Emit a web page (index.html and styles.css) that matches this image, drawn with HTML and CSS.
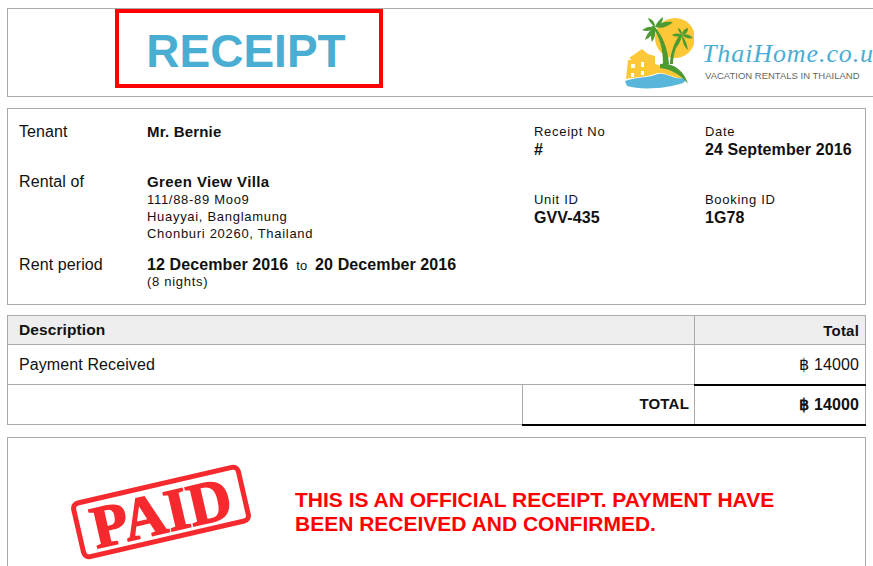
FILE: index.html
```html
<!DOCTYPE html>
<html lang="en">
  <head>
    <meta charset="utf-8" />
    <title>Receipt</title>
    <link rel="stylesheet" href="styles.css">
  </head>
  <body>
    <header class="top-box">
      <h1 class="receipt-title">RECEIPT</h1>
      <div class="logo">
        <svg class="logo-mark" width="70" height="76" viewBox="0 0 70 76">
          <circle cx="51" cy="24" r="20" fill="#fcc838" />
          <path d="M1 67 C12 63 24 64 34 60 C42 58 50 66 60 64 C62 66 61 68 59 69 C42 75 16 76 3 72 Z" fill="#58b6da" />
          <path d="M2 65 L4 46 L8 46 L5 44 L18 35 L24 40 L31 42 L31 50 C40 52 52 58 60 64 C50 65 42 58 34 59 C24 63 12 63 2 65 Z" fill="#fcc838" />
          <path d="M7 50 h4 v4 h-4 Z M7 59 h3 v4 h-3 Z M17 48 h3 v5 h-3 Z M17 57 h3 v4 h-3 Z" fill="#fff" />
          <path d="M36 50 C48 48 60 56 64 70 C58 62 48 55 36 54 Z" fill="#4c9a30" />
          <path d="M29 11 C38 20 44 34 45 50 L39 50 C39 36 36 22 28 13 Z" fill="#4c9a30" />
          <path d="M58 21 C53 30 49 40 49 50 L46 50 C46 40 50 29 56 20 Z" fill="#4c9a30" />
          <path d="M31 13 C33 8 36 5 39 3 C39 8 36 12 31 13 Z" fill="#4c9a30" />
          <path d="M31 13 C36 8 43 7 49 8 C44 13 37 15 31 13 Z" fill="#4c9a30" />
          <path d="M31 13 C27 10 25 7 24 4 C28 5 31 8 31 13 Z" fill="#4c9a30" />
          <path d="M31 13 C26 12 22 13 18 16 C23 18 28 17 31 13 Z" fill="#4c9a30" />
          <path d="M31 13 C26 16 22 21 21 26 C26 24 30 19 31 13 Z" fill="#4c9a30" />
          <path d="M31 13 C32 19 31 24 28 28 C26 23 27 17 31 13 Z" fill="#4c9a30" />
          <path d="M58 21 C58 18 60 15 64 14 C64 18 62 20 58 21 Z" fill="#4c9a30" />
          <path d="M58 21 C62 19 66 21 69 24 C65 25 61 24 58 21 Z" fill="#4c9a30" />
          <path d="M58 21 C56 19 54 17 54 14 C57 15 58 18 58 21 Z" fill="#4c9a30" />
          <path d="M58 21 C55 19 51 19 48 21 C51 23 55 23 58 21 Z" fill="#4c9a30" />
          <path d="M58 21 C54 25 51 30 49 36 C54 33 57 27 58 21 Z" fill="#4c9a30" />
          <path d="M58 21 C61 25 63 30 64 36 C60 33 58 27 58 21 Z" fill="#4c9a30" />
        </svg>
        <div class="logo-text">
          <div class="logo-name">ThaiHome.co.uk</div>
          <div class="logo-tag">VACATION RENTALS IN THAILAND</div>
        </div>
      </div>
    </header>

    <section class="details">
      <div class="party">
        <div class="party-row row-tenant">
          <div class="party-label">Tenant</div>
          <div><b>Mr. Bernie</b></div>
        </div>
        <div class="party-row row-rental">
          <div class="party-label">Rental of</div>
          <div>
            <b class="wide">Green View Villa</b>
            <div class="small">111/88-89 Moo9<br />Huayyai, Banglamung<br />Chonburi 20260, Thailand</div>
          </div>
        </div>
        <div class="party-row">
          <div class="party-label">Rent period</div>
          <div>
            <b class="large">12 December 2016</b><span class="small to">to</span><b class="large">20 December 2016</b>
            <div class="small nights">(8 nights)</div>
          </div>
        </div>
      </div>
      <div class="meta">
        <div class="meta-item">
          <div class="small">Receipt No</div>
          <b class="large">#</b>
        </div>
        <div class="meta-item">
          <div class="small">Date</div>
          <b class="large">24 September 2016</b>
        </div>
        <div class="meta-item">
          <div class="small">Unit ID</div>
          <b class="large">GVV-435</b>
        </div>
        <div class="meta-item">
          <div class="small">Booking ID</div>
          <b class="large">1G78</b>
        </div>
      </div>
    </section>

    <table class="items">
      <colgroup>
        <col class="col-a" />
        <col class="col-b" />
        <col class="col-c" />
      </colgroup>
      <tr class="head-row">
        <th colspan="2" class="left">Description</th>
        <th class="right">Total</th>
      </tr>
      <tr class="item-row">
        <td colspan="2">Payment Received</td>
        <td class="right">฿ 14000</td>
      </tr>
      <tr class="sum-row">
        <td></td>
        <td class="right sum"><b>TOTAL</b></td>
        <td class="right sum grand"><b>฿ 14000</b></td>
      </tr>
    </table>

    <section class="paid-box">
      <div class="stamp-wrap">
        <div class="stamp">PAID</div>
      </div>
      <p class="paid-note">THIS IS AN OFFICIAL RECEIPT. PAYMENT HAVE BEEN RECEIVED AND CONFIRMED.</p>
    </section>
  </body>
</html>
```

FILE: styles.css
```css
html {
  overflow: hidden;
}

body {
  margin: 8px 0 0 7px;
  background-color: #ffffff;
  color: #111111;
  font-family: "Liberation Sans", Arial, sans-serif;
  font-size: 16px;
  letter-spacing: 0.1px;
}

b {
  font-size: 15px;
  font-weight: 700;
  letter-spacing: 0.2px;
}

b.large {
  font-size: 16px;
  letter-spacing: 0.1px;
}

b.wide {
  letter-spacing: 0.4px;
}

.small {
  font-size: 13px;
  line-height: 17px;
  letter-spacing: 0.7px;
  font-weight: 400;
}

.top-box {
  display: flex;
  justify-content: space-between;
  height: 87px;
  border: 1px solid #aaaaaa;
  border-right: none;
}

.receipt-title {
  box-sizing: border-box;
  width: 268px;
  height: 79px;
  margin: 0 0 0 107px;
  padding-right: 6px;
  border: 4px solid #ff0000;
  color: #4aaed2;
  font-size: 46px;
  line-height: 77px;
  letter-spacing: 0;
  text-align: center;
}

.logo {
  display: flex;
  align-items: flex-start;
  margin-right: 13px;
  padding-top: 5px;
}

.logo-mark {
  margin-right: 8px;
}

.logo-text {
  width: 158px;
  padding-top: 26px;
}

.logo-name {
  color: #4aaed2;
  font-family: "Liberation Serif", serif;
  font-size: 26px;
  font-style: italic;
  line-height: 28px;
  letter-spacing: 0.9px;
  white-space: nowrap;
}

.logo-tag {
  margin-top: 2px;
  margin-left: 3px;
  color: #666666;
  font-size: 9.5px;
  line-height: 12px;
  letter-spacing: 0;
  white-space: nowrap;
}

.details {
  display: flex;
  box-sizing: border-box;
  width: 859px;
  height: 197px;
  margin-top: 11px;
  padding: 14px 11px 0;
  border: 1px solid #aaaaaa;
}

.party {
  width: 515px;
}

.party-row {
  display: flex;
  line-height: 18px;
}

.party-label {
  width: 128px;
  flex-shrink: 0;
}

.row-tenant {
  height: 50px;
}

.row-rental {
  height: 83px;
}

.to {
  margin: 0 8px;
  letter-spacing: 0;
}

.nights {
  margin-top: -1px;
}

.meta {
  display: grid;
  grid-template-columns: 171px 1fr;
  grid-auto-rows: 68px;
  line-height: 19px;
}

.items {
  box-sizing: border-box;
  width: 859px;
  margin-top: 10px;
  border-collapse: collapse;
  table-layout: fixed;
}

.col-a {
  width: 515px;
}

.col-b {
  width: 172px;
}

.items th,
.items td {
  padding: 0 6px 0 11px;
  border: 1px solid #aaaaaa;
}

.items th {
  background-color: #eeeeee;
  font-size: 15.5px;
  font-weight: 700;
}

.items th.right {
  font-size: 15px;
  letter-spacing: 0.2px;
}

.items .grand b {
  font-size: 16px;
  letter-spacing: 0.1px;
}

.head-row {
  height: 29px;
}

.item-row {
  height: 40px;
}

.sum-row {
  height: 40px;
}

.left {
  text-align: left;
}

.items .right {
  text-align: right;
}

.items .sum {
  border-bottom: 2px solid #000000;
  padding-right: 5px;
}

.items .grand {
  border-top: 2px solid #000000;
  padding-right: 6px;
}

.paid-box {
  display: flex;
  box-sizing: border-box;
  width: 859px;
  height: 150px;
  margin-top: 11px;
  border: 1px solid #aaaaaa;
  border-bottom: none;
}

.stamp-wrap {
  width: 287px;
  flex-shrink: 0;
  padding: 44px 0 0 66px;
  box-sizing: border-box;
}

.stamp {
  box-sizing: border-box;
  width: 174px;
  height: 60px;
  border: 5px solid #f62a2e;
  border-radius: 8px;
  color: #f62a2e;
  font-family: "Liberation Serif", serif;
  font-size: 60px;
  font-weight: 700;
  line-height: 52px;
  letter-spacing: 0;
  text-align: center;
  -webkit-text-stroke: 1.5px #f62a2e;
  transform: rotate(-13deg);
}

.paid-note {
  width: 500px;
  margin: 50px 0 0;
  color: #ff0000;
  font-size: 21px;
  font-weight: 700;
  line-height: 24px;
  letter-spacing: 0;
}
```
